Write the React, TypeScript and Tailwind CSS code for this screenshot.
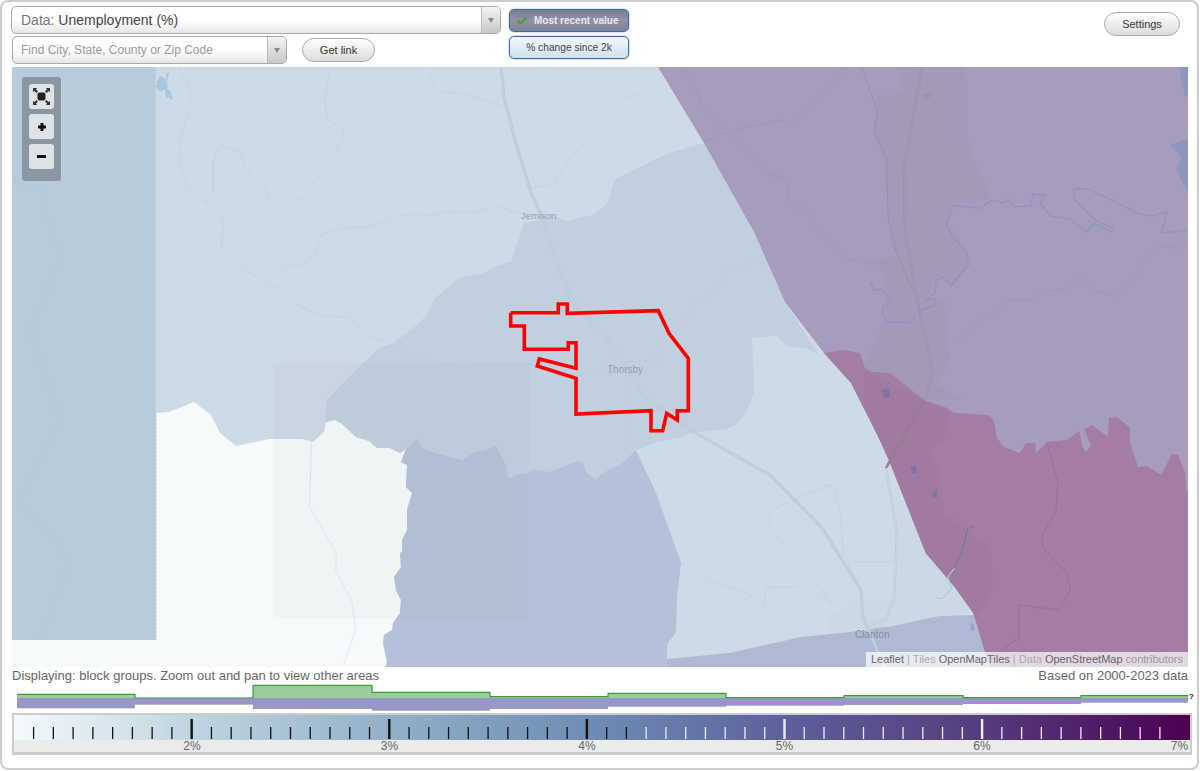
import { Check } from 'lucide-react'

// trace helpers: the numbers below were read off zoomed crops of the map
const trace = (ox: number, oy: number, raw: string) => {
  const n = raw.trim().split(/[\s,]+/).map(Number)
  const out: string[] = []
  for (let i = 0; i < n.length; i += 2) {
    out.push(`${(ox + n[i] / 2.8).toFixed(1)},${(oy + n[i + 1] / 3).toFixed(1)}`)
  }
  return out.join(' ')
}
const east = (raw: string) => trace(640, 60, raw)
const west = (raw: string) => trace(140, 60, raw)
const south = (raw: string) => trace(640, 340, raw)
const southWest = (raw: string) => trace(140, 340, raw)

const whiteArea =
  '156,413 169,412 194,402 211,415 220,433 236,446 269,439 302,439 313,442 324,432 326,422 335,420 342,424 356,437 369,441 377,448 390,448 400,453 406,449 401,462 407,465 406,487 412,493 407,510 407,530 402,540 402,552 400,553 401,567 394,577 396,590 401,600 400,613 393,623 392,630 384,635 383,643 387,662 385,667 12,667 12,640 156,640'
const midArea =
  '704,143 669,153 615,179 608,203 595,214 567,221 556,217 524,223 511,262 497,266 483,273 461,277 435,298 427,315 411,330 392,344 379,348 351,375 327,400 325,422 335,420 342,424 356,437 369,441 377,448 390,448 400,453 406,449 417,439 422,448 435,453 463,460 474,452 486,450 495,445 506,465 508,477 511,478 518,474 527,473 533,469 549,472 565,466 577,461 583,462 586,472 595,479 608,470 620,465 636,450 654,443 683,437 690,433 726,429 736,425 747,410 754,393 752,338 776,336 790,347 806,348 819,355 785,302 754,232'
const lowerArea =
  '406,449 417,439 422,448 435,453 463,460 474,452 486,450 495,445 506,465 508,477 511,478 518,474 527,473 533,469 549,472 565,466 577,461 583,462 586,472 595,479 608,470 620,465 636,450 656,493 681,563 677,597 676,632 667,645 667,667 385,667 387,662 383,643 384,635 392,630 393,623 400,613 401,600 396,590 394,577 401,567 400,553 402,552 402,540 407,530 407,510 412,493 406,487 407,465 401,462'
const clantonArea = '667,659 729,653 801,637 869,630 911,617 974,615 990,667 667,667'
const purpleArea = '658,67 1188,67 1188,667 990,667 985,652 974,615 954,563 890,460 851,383 824,353 785,302 754,232 704,143'
const pinkArea =
  '824,353 844,350 860,353 865,368 872,372 890,373 924,400 947,408 954,413 988,415 994,420 997,438 1004,447 1020,453 1026,443 1035,443 1036,453 1047,442 1067,440 1079,431 1083,448 1086,452 1091,446 1084,429 1092,425 1108,437 1109,418 1117,417 1130,428 1130,443 1138,467 1147,466 1161,475 1172,454 1178,455 1185,472 1186,490 1188,490 1188,667 990,667 985,652 974,615 954,563 890,460 851,383'
const townArea = east(
  '720,20 900,20 915,60 915,225 940,320 975,390 980,420 875,430 860,490 915,570 920,620 880,675 830,650 800,720 850,720 860,810 870,905 830,975 910,1020 640,1020 630,900 680,800 690,700 680,620 640,600 720,590 695,480 690,370 680,300 655,210 665,110 740,100'
)
const townPink = south('630,90 790,180 870,220 850,300 810,330 840,400 850,520 980,620 990,740 960,810 940,830 880,740 800,640 700,370 630,200')
const townClanton = south('700,450 880,680 925,820 850,825 700,860 530,875 530,830 610,780 700,780 720,620')

const river = east(
  '645,665 655,690 675,688 705,725 680,740 677,760 690,785 760,788 770,760'
)
const river2 = east(
  '775,755 830,735 825,715 800,720 825,700 830,660 848,652 870,678 920,615 915,575 875,530 858,495 877,435 950,445 985,422 1020,428 1030,420 1050,440 1095,438 1100,402 1135,405 1120,430 1150,468 1205,478 1250,517 1270,490 1320,515 1325,505 1275,480 1215,415 1215,388 1250,385 1320,420 1395,460 1435,468 1475,455 1460,520 1535,510'
)

const lightRoads = [
  west('110,20 148,110 110,240 112,310 135,385 185,425 233,480 228,565 260,605 355,670 385,680 430,730 510,768 590,772 635,830 690,845 745,885 900,920 1000,908 1110,912'),
  west('185,425 205,400 205,310 222,253 280,275 305,340 350,385 358,420 448,420 550,280 570,225 565,205 525,180 517,120 535,20'),
  west('355,670 400,620 450,615 490,580 505,525 580,502 645,502 715,467 800,468 865,455 945,457 1003,438 1060,462'),
  west('810,20 830,95 900,100 1025,140'),
  west('1095,382 1158,375 1200,300 1270,215 1360,115 1430,85 1460,50'),
  '577,375 613,375 625,362 660,360 663,337 685,323 694,305 726,283 726,272 752,262 767,265',
  '626,373 627,433 636,450',
  south('365,510 520,437 540,437 560,510 570,640 620,750'),
  south('365,510 362,560 430,650 540,790'),
  south('0,680 120,670 185,715 300,760 345,805 355,742 450,740 540,790'),
  south('600,665 720,665'),
]
const purpleRoads = [
  east('100,28 125,35 160,95 170,135 215,180 245,225 325,290 360,340 410,360 420,425 465,455 550,570 590,600 640,610 720,660 765,695'),
  east('180,245 225,222 270,210 310,195 335,198 390,180 430,195 465,155 480,120 550,60 580,20'),
  east('880,850 1030,720 1090,722 1140,695 1190,685 1235,642 1275,690 1330,710 1390,650 1400,610 1455,555 1500,565 1535,545'),
]
const pinkRoads = [
  south('1140,310 1170,425 1165,510 1125,590 1130,625 1195,700 1205,750 1175,810 1060,795 1060,895 1010,932'),
]
const highway =
  '501,67 504,97 515,140 531,193 542,217 556,257 570,298 586,317 603,333 633,377 645,398 667,413 694,432 770,475 822,528 861,590 863,617 877,650 885,667'
const highwayPurple = '922,67 904,167 905,230 915,290 933,373 926,397 924,400'
const highwayPink = '924,400 886,468'
const highwayLight = '886,468 897,533 894,600 886,620 869,625'
const cityBorder =
  '510.7,312.7 558.3,312.7 558.3,304 567.3,304 567.3,313.3 658.3,310.7 669,333.3 688.3,358.3 688.3,410.7 677.3,410.7 677.3,420 666.7,413.3 662.7,430.7 651,430.7 651,410.7 576,414 576,378.3 537.3,366 539.3,359 576,368.3 576,342.7 568.3,342.7 568.3,349.3 524.3,349.3 524.3,326 510.7,326'

const histogram = [
  { from: 17, to: 135, green: 694.3, purple: 708.3 },
  { from: 135, to: 253, green: 698, purple: 704.7 },
  { from: 253, to: 372, green: 685.3, purple: 709 },
  { from: 372, to: 490, green: 692.3, purple: 710.7 },
  { from: 490, to: 608, green: 696.7, purple: 709 },
  { from: 608, to: 726, green: 693.3, purple: 706.7 },
  { from: 726, to: 844, green: 697.7, purple: 705.7 },
  { from: 844, to: 963, green: 695.7, purple: 705 },
  { from: 963, to: 1081, green: 697.7, purple: 704 },
  { from: 1081, to: 1188, green: 695.7, purple: 702.7 },
]
const greenLine = histogram.map((h) => `${h.from},${h.green} ${h.to},${h.green}`).join(' ')

const ticks = Array.from({ length: 58 }, (_, i) => i)
const labels = ['2%', '3%', '4%', '5%', '6%', '7%']

function MapLayer() {
  return (
    <svg viewBox="12 67 1176 600" className="absolute inset-0 block h-[600px] w-[1176px]">
      <rect x="12" y="67" width="1176" height="600" fill="#cddbe6" />
      <polygon points={whiteArea} fill="#f6fafb" />
      <polygon points={midArea} fill="#c0d0df" />
      <polygon points={lowerArea} fill="#b4c1d9" />
      <polygon points={clantonArea} fill="#b0b9d2" />
      <polygon points={townClanton} fill="#cad9e3" />
      <polygon points={purpleArea} fill="#a89cbc" />
      <polygon points={townArea} fill="#a499b6" />
      <polygon points={pinkArea} fill="#a37da2" />
      <polygon points={townPink} fill="#a17b9f" />

      {lightRoads.map((p, i) => (
        <polyline key={i} points={p} fill="none" stroke="#b9c9d8" strokeOpacity="0.45" strokeWidth="1" />
      ))}
      <polyline points={southWest('480,305 475,500 550,640 548,690 595,790 603,870 570,975')} fill="none" stroke="#e4ebee" strokeWidth="1" />
      {purpleRoads.map((p, i) => (
        <polyline key={i} points={p} fill="none" stroke="#9a8fae" strokeOpacity="0.5" strokeWidth="1" />
      ))}
      {pinkRoads.map((p, i) => (
        <polyline key={i} points={p} fill="none" stroke="#936c94" strokeWidth="0.8" />
      ))}
      <polyline points={east('620,20 665,155 655,215 690,295 695,480 715,570 765,695')} fill="none" stroke="#968caa" strokeWidth="0.8" />

      <polyline points={highway} fill="none" stroke="#bac9d6" strokeWidth="3" />
      <polyline points={highway} fill="none" stroke="#c8d6e1" strokeWidth="1" />
      <polyline points={highwayPurple} fill="none" stroke="#988ead" strokeWidth="2.5" />
      <polyline points={highwayPurple} fill="none" stroke="#a89fb9" strokeWidth="0.9" />
      <polyline points={highwayPink} fill="none" stroke="#94708f" strokeWidth="2.5" />
      <polyline points={highwayPink} fill="none" stroke="#a58aa8" strokeWidth="0.9" />
      <polyline points={highwayLight} fill="none" stroke="#bccbd6" strokeWidth="2.5" />
      <polyline points={highwayLight} fill="none" stroke="#cddbe6" strokeWidth="0.9" />

      <polyline points={river} fill="none" stroke="#8d95c1" strokeWidth="1.3" />
      <polyline points={river2} fill="none" stroke="#8d95c1" strokeWidth="1.3" />
      <polyline points={south('880,680 900,640 918,565 937,558')} fill="none" stroke="#7377a8" strokeWidth="1.1" />
      <polyline points={south('880,685 862,710 872,745 845,777 826,773')} fill="none" stroke="#a9cbe4" strokeWidth="1.1" />

      <polygon points="155,86 160,76 166,79 168,88 160,92" fill="#a9c7e0" />
      <polygon points="164,87 170,90 173,100 166,97" fill="#a9c7e0" />
      <polygon points="166,74 169,72 167,83" fill="#a9c7e0" />
      <polygon points="923,95 934,92 927,100" fill="#8f95c1" />
      <polygon points={east('1510,20 1535,20 1535,110 1525,105 1515,60')} fill="#8f95c1" />
      <polygon points={east('1485,255 1520,240 1535,240 1535,400 1520,370 1502,330 1515,290')} fill="#8f95c1" />
      <polygon points="882,390 889,388 890,397 884,398" fill="#7f74a5" />
      <polygon points="910,467 916,466 917,473 912,473" fill="#7f74a5" />
      <polygon points="932,493 937,490 937,498 933,497" fill="#7f74a5" />
      <polygon points="970,624 973,623 975,630 971,631" fill="#8ba9d0" />

      <rect x="273" y="363" width="256" height="256" fill="#808080" fillOpacity="0.05" />
      <rect x="12" y="67" width="144" height="573" fill="#b8cbda" />
      <line x1="156" y1="67" x2="156" y2="640" stroke="#cbd6e0" strokeWidth="2" strokeDasharray="2 2" />
      <polyline points="12,180 40,190 60,260 30,330 60,420 20,500 70,560 40,640" fill="none" stroke="#aec2d2" strokeOpacity="0.35" />
      <polyline points={cityBorder + ' 510.7,312.7'} fill="none" stroke="#ff0000" strokeWidth="3.6" />
    </svg>
  )
}

function Pill({ children, className }: { children: React.ReactNode; className: string }) {
  return (
    <button className={`h-6 rounded-full border border-[#aaaaaa] bg-gradient-to-b from-white to-[#dcdcdc] text-[11px] text-[#333] ${className}`}>
      {children}
    </button>
  )
}

function Arrow() {
  return (
    <div className="flex w-[19px] shrink-0 items-center justify-center border-l border-[#bbbbbb] bg-gradient-to-b from-[#f4f4f4] to-[#c8c8c8]">
      <div className="h-0 w-0 border-x-[3.5px] border-t-[5px] border-x-transparent border-t-[#888888]" />
    </div>
  )
}

function ZoomButton({ children }: { children: React.ReactNode }) {
  return <div className="flex h-[25px] w-[25px] items-center justify-center rounded-[3px] bg-[#e0e3e6]">{children}</div>
}

export default function App() {
  return (
    <div className="h-[771px] w-[1200px] overflow-hidden bg-white font-['Liberation_Sans',Arial,sans-serif]">
      <div className="flex h-[770px] w-[1199px] flex-col rounded-lg border-2 border-[#cccccc]">
        <header className="flex h-[65px] shrink-0 items-start pl-[9px]">
          <div className="w-[490px]">
            <div className="mt-[4px] flex h-[28px] overflow-hidden rounded-[5px] border border-[#aaaaaa] bg-gradient-to-b from-white via-white to-[#e6e6e6]">
              <div className="flex-1 pl-[9px] text-[14px] leading-[26px] text-[#444]">
                <span className="text-[#777]">Data:</span> Unemployment (%)
              </div>
              <Arrow />
            </div>
            <div className="mt-[2px] flex items-center">
              <div className="ml-px flex h-[28px] w-[275px] overflow-hidden rounded-[5px] border border-[#aaaaaa] bg-gradient-to-b from-white via-white to-[#e6e6e6]">
                <div className="flex-1 pl-[8px] text-[12px] leading-[26px] text-[#999]">Find City, State, County or Zip Code</div>
                <Arrow />
              </div>
              <Pill className="ml-[15px] w-[73px]">Get link</Pill>
            </div>
          </div>
          <div className="ml-[8px] mt-[7px] flex w-[120px] flex-col gap-[4px]">
            <div className="flex h-[23px] items-center rounded-[5px] border-[1.5px] border-[#3a6ca8] bg-gradient-to-b from-[#7a7c92] via-[#9092a6] to-[#7f8399] pl-[6px] text-[10px] font-bold text-[#e8e8ee] shadow-[0_0_2px_#999]">
              <span className="mr-[6px] flex h-[11px] w-[12px] items-center justify-center">
                <Check size={14} strokeWidth={4} className="text-[#4f9a2e]" />
              </span>
              Most recent value
            </div>
            <div className="flex h-[23px] items-center justify-center rounded-[5px] border-[1.5px] border-[#3a6ca8] bg-gradient-to-b from-[#f4f9fc] to-[#cfe0ec] text-[10.2px] text-[#444] shadow-[0_0_2px_#999]">
              % change since 2k
            </div>
          </div>
          <Pill className="ml-auto mr-[17px] mt-[10px] w-[76px]">Settings</Pill>
        </header>

        <main className="relative ml-[10px] h-[600px] w-[1176px] shrink-0 overflow-hidden">
          <MapLayer />
          <span className="absolute left-[509px] top-[142px] text-[9.5px] text-[#8f9fb8]">Jemison</span>
          <span className="absolute left-[595px] top-[295px] text-[10px] text-[#8f9fb8]">Thorsby</span>
          <span className="absolute left-[843px] top-[560px] text-[10px] text-[#7f8fa8]">Clanton</span>
          <div className="absolute left-[10px] top-[10px] flex flex-col gap-[5px] rounded-[3px] bg-[#8a96a2] px-[7px] pb-[12px] pt-[7px]">
            <ZoomButton>
              <svg width="17" height="17" viewBox="0 0 17 17">
                <rect x="4.5" y="4.5" width="8" height="8" rx="2" fill="#222" />
                <path d="M0 0h4L3 1.5 5 3.5 3.5 5 1.5 3 0 4zM17 0h-4l1 1.5-2 2L13.5 5l2-2L17 4zM0 17h4l-1-1.5 2-2L3.5 12l-2 2L0 13zM17 17h-4l1-1.5-2-2 1.5-1.5 2 2 1.5-1z" fill="#333" />
              </svg>
            </ZoomButton>
            <ZoomButton>
              <svg width="10" height="10" viewBox="0 0 10 10">
                <path d="M3.5 1h3v2.5H9v3H6.500V9h-3V6.500H1v-3h2.500z" fill="#111" />
              </svg>
            </ZoomButton>
            <ZoomButton>
              <div className="h-[3px] w-[9px] bg-[#111]" />
            </ZoomButton>
          </div>
          <div className="absolute bottom-0 right-0 flex h-[15px] w-[322px] items-center justify-center whitespace-nowrap bg-white/70 text-[11px] text-[#999]">
            <span className="font-medium text-[#666]">Leaflet</span>
            <span className="mx-[3px] text-[#aaa]">|</span>
            <span className="text-[#aaa]">Tiles</span>
            <span className="ml-[3px] text-[#666]">OpenMapTiles</span>
            <span className="mx-[3px] text-[#aaa]">|</span>
            <span className="text-[#aaa]">Data</span>
            <span className="ml-[3px] text-[#666]">OpenStreetMap</span>
            <span className="ml-[3px] text-[#999]">contributors</span>
          </div>
        </main>

        <div className="ml-[10px] flex h-[17px] w-[1176px] shrink-0 justify-between text-[13px] leading-[17px] text-[#666]">
          <span>Displaying: block groups. Zoom out and pan to view other areas</span>
          <span>Based on 2000-2023 data</span>
        </div>

        <svg viewBox="12 684 1184 28" className="ml-[10px] block h-[28px] w-[1184px] shrink-0">
          {histogram.map((h) => (
            <g key={h.from}>
              <rect x={h.from} y={h.green} width={h.to - h.from} height={698 - h.green} fill="#9bcc9b" />
              <rect x={h.from} y={698} width={h.to - h.from} height={h.purple - 698} fill="#9996c8" />
            </g>
          ))}
          <polyline points={greenLine} fill="none" stroke="#3d9a3d" strokeWidth="1.2" />
          <text x="1189" y="699" fontSize="8" fontWeight="700" fill="#222">?</text>
        </svg>

        <div className="relative ml-[10px] mt-px h-[42px] w-[1180px] shrink-0 border-2 border-b-[3px] border-[#cccccc] bg-[#ebebeb]">
          <div className="h-[25px] bg-[linear-gradient(to_right,#f5fafc_0%,#c0d5e0_15%,#92b0c8_32%,#6d8db5_49%,#5d5f9a_66%,#553a7b_83%,#4b0050_100%)]">
            <svg viewBox="14 715 1176 25" className="block h-[25px] w-[1176px]">
              {ticks.map((i) => {
                const x = 33.6 + i * 19.76
                const major = (i + 2) % 10 === 0 && i > 0
                const dark = x < 640
                return (
                  <line
                    key={i}
                    x1={x}
                    x2={x}
                    y1={major ? 719 : 727}
                    y2={739}
                    stroke={dark ? '#111' : '#eeeeee'}
                    strokeWidth={major ? 2.4 : 1.3}
                  />
                )
              })}
            </svg>
          </div>
          {labels.map((label, i) => (
            <span
              key={label}
              className="absolute top-[25px] -translate-x-1/2 text-[12px] leading-[13px] text-[#666]"
              style={{ left: 178 + i * 197.5 }}
            >
              {label}
            </span>
          ))}
        </div>
      </div>
    </div>
  )
}
